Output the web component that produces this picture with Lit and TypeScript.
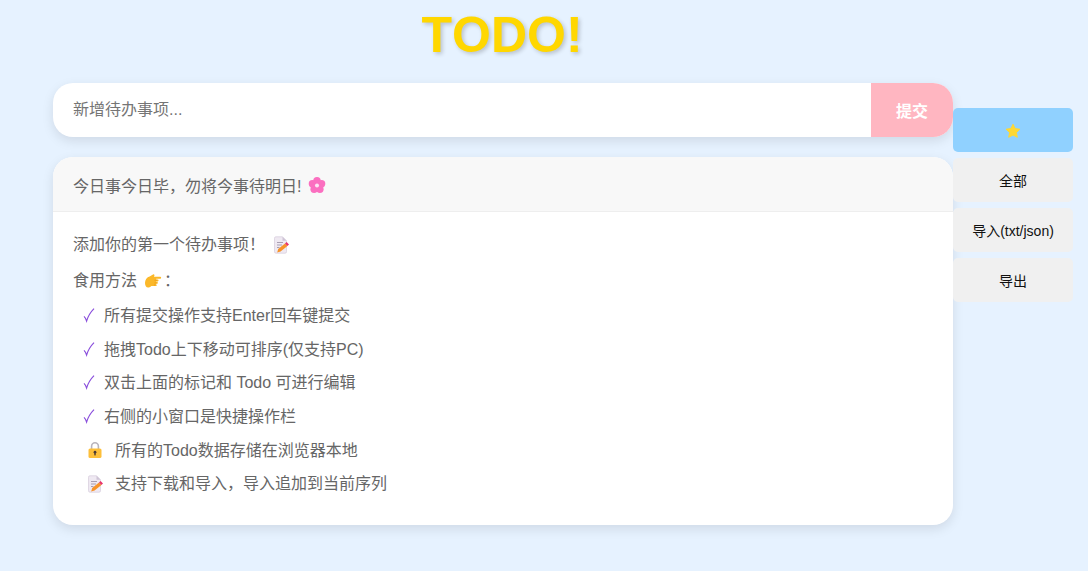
import { LitElement, html, css, svg } from "lit";
import { customElement, state } from "lit/decorators.js";

const memo = svg`<svg class="ico" viewBox="0 0 16 18" width="16" height="18">
  <path d="M1.5 2.2a1.4 1.4 0 0 1 1.4-1.4h6.6l4 4v11a1.4 1.4 0 0 1-1.4 1.4h-9.2a1.4 1.4 0 0 1-1.4-1.4z" fill="#efe9f2" stroke="#d9d0de" stroke-width=".8"/>
  <path d="M9.5.8v4h4z" fill="#cfc5d6"/>
  <path d="M4 6.5h6M4 9h5M4 11.5h2.5" stroke="#a99fb2" stroke-width="1" fill="none"/>
  <path d="M4.2 16.6l1-3.6 6.8-5.6 2.4 2.6-6.8 5.5z" fill="#f79329"/>
  <path d="M12 7.4l1.6-1.4 2.4 2.5-1.6 1.5z" fill="#e8336b"/>
</svg>`;

const hand = svg`<svg class="ico" viewBox="0 0 18 17" width="18" height="17">
  <path d="M1 10c0-3.4 2-6 4.6-6.6l3.4-2c1-.5 1.9.6 1.3 1.5l-.5.8h6.4c1.3 0 1.3 2.1 0 2.1h-4v.7h1.6c1 0 1 1.9 0 1.9h-1.6v.7h1c.9 0 .9 1.7 0 1.7h-1v.7c.7.2.6 1.6-.2 1.6H7.4C3.5 16.3 1 14 1 10z" fill="#fbb829"/>
  <path d="M10.5 7.3h2.6M10.5 9.9h2M10 12h1.2" stroke="#e8961a" stroke-width=".7" fill="none"/>
</svg>`;

const lock = svg`<svg class="ico" viewBox="0 0 16 18" width="16" height="18">
  <path d="M4.6 8V5.2a3.4 3.4 0 0 1 6.8 0V8" fill="none" stroke="#b9b5bd" stroke-width="1.6"/>
  <rect x="1.5" y="7.5" width="13" height="9.5" rx="1.6" fill="#fdbf3a"/>
  <circle cx="8" cy="11.2" r="1.4" fill="#4a3a33"/>
  <rect x="7.3" y="11.4" width="1.4" height="3" fill="#4a3a33"/>
</svg>`;

const flower = svg`<svg class="ico" viewBox="0 0 18 18" width="18" height="18">
  <g fill="#fb6fc0">
    <circle cx="9" cy="4.6" r="3.7"/>
    <circle cx="13.6" cy="7.8" r="3.7"/>
    <circle cx="11.9" cy="13.2" r="3.7"/>
    <circle cx="6.1" cy="13.2" r="3.7"/>
    <circle cx="4.4" cy="7.8" r="3.7"/>
  </g>
  <circle cx="9" cy="9.4" r="2" fill="#fde3f2"/>
</svg>`;

const star = svg`<svg class="star" viewBox="0 0 16 16" width="16" height="16">
  <path d="M8 1.2l2.1 4.4 4.8.6-3.5 3.3.9 4.8L8 12l-4.3 2.3.9-4.8L1.1 6.2l4.8-.6z" fill="#fdd835" stroke="#fdd835" stroke-width="1" stroke-linejoin="round"/>
</svg>`;

const check = svg`<svg class="check" viewBox="0 0 12 16" width="12" height="16">
  <path d="M1 9.4c1 .9 1.9 2.4 2.6 4.6C5 9.4 7.6 5 11 1.6" fill="none" stroke="#8a4fdc" stroke-width="1.2"/>
</svg>`;

@customElement("app-root")
export class AppRoot extends LitElement {
  static styles = css`
    :host {
      display: block;
      min-height: 571px;
      background: #e6f2ff;
      font-family: "Liberation Sans", "Noto Sans CJK SC", sans-serif;
      font-size: 16px;
      color: #666;
    }
    .page {
      display: flex;
      align-items: flex-start;
      padding-left: 53px;
    }
    .main {
      width: 900px;
    }
    h1 {
      margin: 0;
      padding: 7px 2px 0 0;
      height: 83px;
      box-sizing: border-box;
      text-align: center;
      font-size: 50px;
      line-height: 57px;
      font-weight: 700;
      font-kerning: none;
      color: #ffd700;
      text-shadow: 2px 2px 4px rgba(0, 0, 0, 0.2);
    }
    .entry {
      display: flex;
      height: 54px;
      border-radius: 20px;
      overflow: hidden;
      background: #fff;
      box-shadow: 0 4px 12px rgba(0, 0, 0, 0.1);
    }
    .entry input {
      flex: 1;
      min-width: 0;
      border: 0;
      outline: 0;
      padding: 0 20px;
      background: transparent;
      font: inherit;
      color: #666;
    }
    .entry input::placeholder {
      color: #757575;
    }
    .entry button {
      width: 82px;
      border: 0;
      background: #ffb6c1;
      color: #fff;
      font: inherit;
      font-weight: 700;
    }
    .card {
      margin-top: 20px;
      height: 368px;
      border-radius: 20px;
      overflow: hidden;
      background: #fff;
      box-shadow: 0 4px 12px rgba(0, 0, 0, 0.1);
    }
    .head {
      display: flex;
      align-items: center;
      gap: 7px;
      height: 55px;
      box-sizing: border-box;
      padding: 2px 20px 0;
      background: #f8f8f8;
      border-bottom: 1px solid #eee;
    }
    .body {
      padding: 20px;
      line-height: 25.6px;
    }
    .body p {
      margin: 0 0 10px;
      display: flex;
      align-items: center;
    }
    .ico {
      display: block;
    }
    .memo-gap {
      margin: 1px 0 0 8px;
    }
    .hand-gap {
      margin: 3px 2px 0 7px;
    }
    ul {
      list-style: none;
      margin: 0;
      padding: 0;
    }
    li {
      display: flex;
      align-items: center;
      height: 25.6px;
      margin-bottom: 8px;
      padding-left: 10px;
    }
    .check {
      flex: none;
      margin: 0 9px 2px 0;
    }
    .lead {
      flex: none;
      width: 16px;
      margin: 0 12px 0 4px;
      display: flex;
    }
    .side {
      display: flex;
      flex-direction: column;
      gap: 6px;
      width: 120px;
      margin-top: 108px;
    }
    .side button {
      height: 44px;
      border: 0;
      border-radius: 5px;
      padding: 0;
      background: #f0f0f0;
      color: #111;
      font: inherit;
      font-size: 14px;
      font-kerning: none;
      display: flex;
      align-items: center;
      justify-content: center;
    }
    .side button.on {
      background: #90d1ff;
    }
    .star {
      margin-top: 1px;
    }
  `;

  @state() notes = [
    "所有提交操作支持Enter回车键提交",
    "拖拽Todo上下移动可排序(仅支持PC)",
    "双击上面的标记和 Todo 可进行编辑",
    "右侧的小窗口是快捷操作栏",
  ];

  render() {
    return html`
      <div class="page">
        <div class="main">
          <h1>TODO!</h1>
          <div class="entry">
            <input placeholder="新增待办事项..." />
            <button>提交</button>
          </div>
          <div class="card">
            <div class="head">今日事今日毕，勿将今事待明日! ${flower}</div>
            <div class="body">
              <p>添加你的第一个待办事项！<span class="memo-gap">${memo}</span></p>
              <p>食用方法<span class="hand-gap">${hand}</span>：</p>
              <ul>
                ${this.notes.map((n) => html`<li>${check}${n}</li>`)}
                <li><span class="lead">${lock}</span>所有的Todo数据存储在浏览器本地</li>
                <li><span class="lead">${memo}</span>支持下载和导入，导入追加到当前序列</li>
              </ul>
            </div>
          </div>
        </div>
        <div class="side">
          <button class="on">${star}</button>
          <button>全部</button>
          <button>导入(txt/json)</button>
          <button>导出</button>
        </div>
      </div>
    `;
  }
}
